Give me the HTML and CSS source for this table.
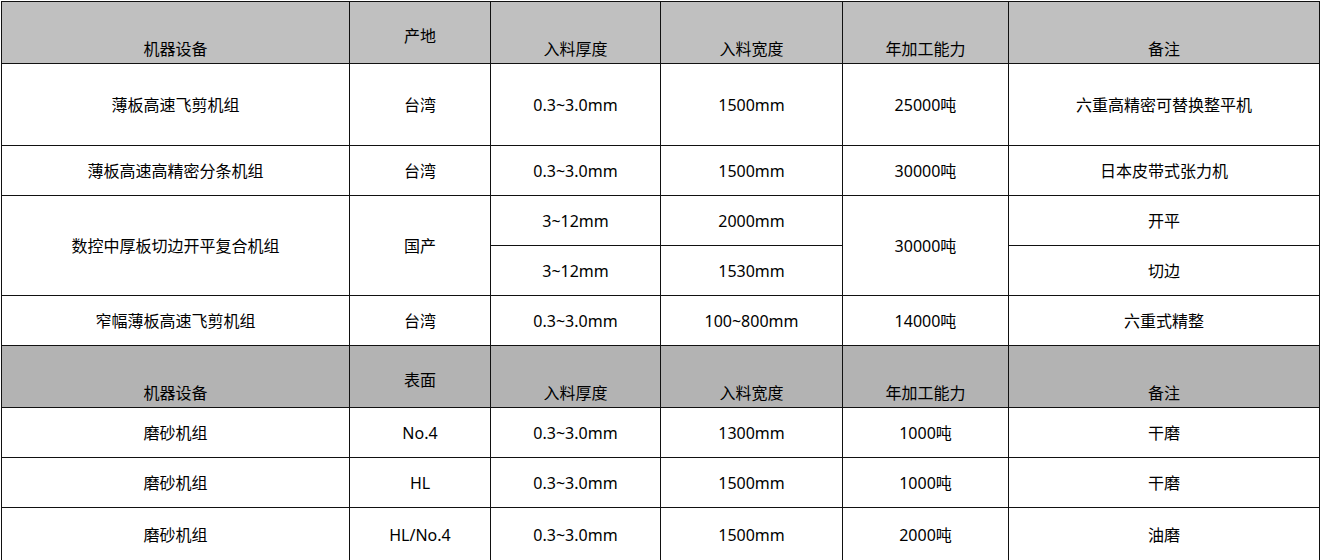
FILE: index.html
```html
<!DOCTYPE html>
<html lang="zh-CN">
<head>
<meta charset="utf-8">
<title>设备</title>
<link rel="stylesheet" href="styles.css">
</head>
<body>
<table class="equip">
  <colgroup>
    <col class="c1"><col class="c2"><col class="c3"><col class="c4"><col class="c5"><col class="c6">
  </colgroup>
  <tr class="head h1">
    <td class="bot">机器设备</td>
    <td class="mid">产地</td>
    <td class="bot">入料厚度</td>
    <td class="bot">入料宽度</td>
    <td class="bot">年加工能力</td>
    <td class="bot">备注</td>
  </tr>
  <tr class="tall">
    <td>薄板高速飞剪机组</td><td>台湾</td><td>0.3~3.0mm</td><td>1500mm</td><td>25000吨</td><td>六重高精密可替换整平机</td>
  </tr>
  <tr class="row">
    <td>薄板高速高精密分条机组</td><td>台湾</td><td>0.3~3.0mm</td><td>1500mm</td><td>30000吨</td><td>日本皮带式张力机</td>
  </tr>
  <tr class="row">
    <td rowspan="2">数控中厚板切边开平复合机组</td><td rowspan="2">国产</td><td>3~12mm</td><td>2000mm</td><td rowspan="2">30000吨</td><td>开平</td>
  </tr>
  <tr class="row">
    <td>3~12mm</td><td>1530mm</td><td>切边</td>
  </tr>
  <tr class="row">
    <td>窄幅薄板高速飞剪机组</td><td>台湾</td><td>0.3~3.0mm</td><td>100~800mm</td><td>14000吨</td><td>六重式精整</td>
  </tr>
  <tr class="head h2">
    <td class="bot">机器设备</td>
    <td class="mid">表面</td>
    <td class="bot">入料厚度</td>
    <td class="bot">入料宽度</td>
    <td class="bot">年加工能力</td>
    <td class="bot">备注</td>
  </tr>
  <tr class="row">
    <td>磨砂机组</td><td>No.4</td><td>0.3~3.0mm</td><td>1300mm</td><td>1000吨</td><td>干磨</td>
  </tr>
  <tr class="row">
    <td>磨砂机组</td><td>HL</td><td>0.3~3.0mm</td><td>1500mm</td><td>1000吨</td><td>干磨</td>
  </tr>
  <tr class="last">
    <td>磨砂机组</td><td>HL/No.4</td><td>0.3~3.0mm</td><td>1500mm</td><td>2000吨</td><td>油磨</td>
  </tr>
</table>
</body>
</html>
```
FILE: styles.css
```css
html, body {
  margin: 0;
  padding: 0;
  background: #ffffff;
}
body {
  padding: 1px 0 0 1px;
  font-family: "Noto Sans", "Noto Sans CJK SC", sans-serif;
  font-size: 16px;
  color: #000000;
}
.equip {
  border-collapse: collapse;
  table-layout: fixed;
  width: 1319px;
}
.c1 { width: 348px; }
.c2 { width: 141px; }
.c3 { width: 170px; }
.c4 { width: 182px; }
.c5 { width: 166px; }
.c6 { width: 311px; }
.equip td {
  border: 1px solid #111111;
  text-align: center;
  vertical-align: middle;
  padding: 0;
  line-height: 20px;
  white-space: nowrap;
}
.head { height: 62px; }
.h1 td { background: #c0c0c0; }
.h2 td { background: #b3b3b3; }
.equip td.bot {
  vertical-align: bottom;
  padding-bottom: 4px;
}
.equip td.mid {
  vertical-align: middle;
  padding-top: 6px;
}
.tall { height: 82px; }
.row { height: 50px; }
.last { height: 55px; }
```
